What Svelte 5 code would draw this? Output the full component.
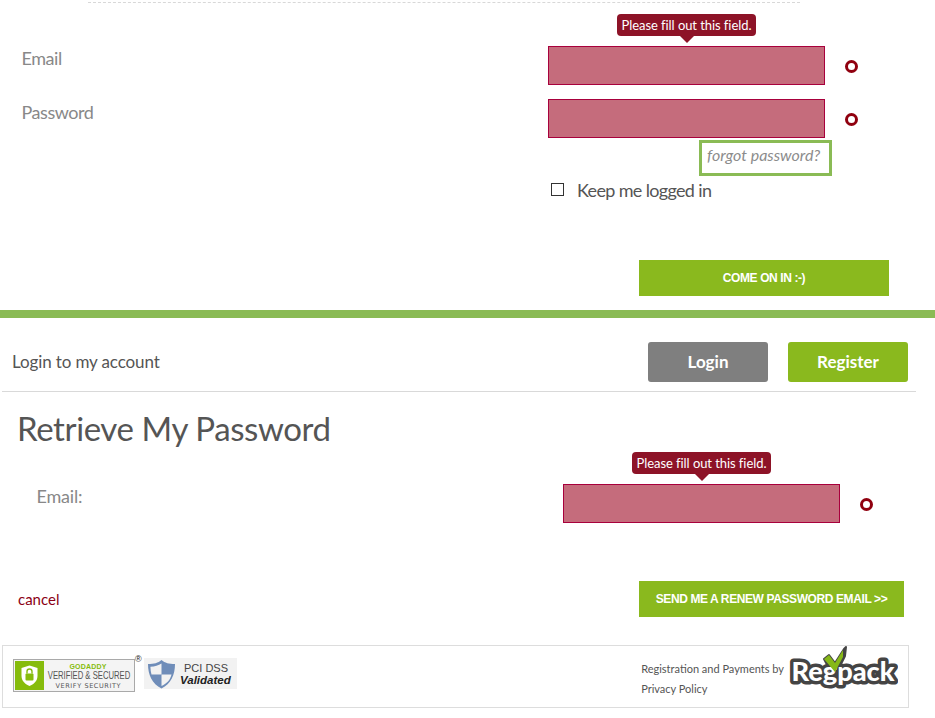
<script>
	const tip = 'Please fill out this field.';
</script>

<div class="page">
	<section class="login">
		<div class="dashes"></div>
		<div class="row first">
			<label class="label" for="email">Email</label>
			<div class="field">
				<span class="tip">{tip}</span>
				<input id="email" class="bad" type="text" />
			</div>
			<span class="dot"></span>
		</div>
		<div class="row second">
			<label class="label" for="password">Password</label>
			<div class="field">
				<input id="password" class="bad" type="password" />
			</div>
			<span class="dot"></span>
		</div>
		<div class="forgot-row">
			<a class="forgot" href="#forgot">forgot password?</a>
		</div>
		<div class="keep">
			<span class="box"></span>
			<span>Keep me logged in</span>
		</div>
		<div class="submit-row">
			<button class="action come">COME ON IN :-)</button>
		</div>
	</section>

	<div class="divider"></div>

	<header class="account">
		<span class="account-title">Login to my account</span>
		<div class="account-btns">
			<button class="btn gray">Login</button>
			<button class="btn green">Register</button>
		</div>
	</header>

	<section class="retrieve">
		<h1>Retrieve My Password</h1>
		<div class="row retrieve-row">
			<label class="label" for="renew">Email:</label>
			<div class="field">
				<span class="tip">{tip}</span>
				<input id="renew" class="bad" type="text" />
			</div>
			<span class="dot"></span>
		</div>
		<div class="retrieve-actions">
			<a class="cancel" href="#cancel">cancel</a>
			<button class="action send">SEND ME A RENEW PASSWORD EMAIL &gt;&gt;</button>
		</div>
	</section>

	<footer class="foot">
		<div class="badges">
			<svg class="godaddy" width="122" height="33" viewBox="0 0 122 33">
				<rect x="0.5" y="0.5" width="121" height="32" fill="#f4f4f4" stroke="#a9a9a9" />
				<rect x="2" y="2" width="29" height="29" fill="#86bc0c" />
				<path d="M16.5 6.5 L24.5 9 V17 C24.5 22 20.5 25.5 16.5 27 C12.5 25.5 8.5 22 8.5 17 V9 Z" fill="#fff" />
				<rect x="12.5" y="14.5" width="8" height="7" rx="1" fill="#86bc0c" />
				<path d="M14 14.5 V12.5 A2.5 2.5 0 0 1 19 12.5 V14.5" fill="none" stroke="#86bc0c" stroke-width="1.4" />
				<text x="75" y="9.5" class="gd1" text-anchor="middle">GODADDY</text>
				<text transform="translate(76 20) scale(.77 1)" class="gd2" text-anchor="middle">VERIFIED &amp; SECURED</text>
				<text x="75" y="29" class="gd3" text-anchor="middle" textLength="65">VERIFY SECURITY</text>
			</svg>
			<span class="reg">®</span>
			<svg class="pci" width="93" height="31" viewBox="0 0 93 31">
				<rect width="93" height="31" fill="#f2f2f2" />
				<g transform="translate(0 1.5)">
					<path d="M17.5 0.5 C21 3.5 25 4.5 31 4.5 C31 15 27 24.5 17.5 29 C8 24.5 4 15 4 4.5 C10 4.5 14 3.5 17.5 0.5 Z" fill="#6f8db9" />
					<path d="M17.5 4 V15 H7.5 C6.8 12.5 6.5 10 6.4 7.3 C11 7 14.5 6 17.5 4 Z" fill="#f2f2f2" />
					<path d="M17.5 15 H27.5 C26.5 20 23 24 17.5 26.5 Z" fill="#f2f2f2" />
				</g>
				<text x="40" y="14" class="pci1">PCI DSS</text>
				<text x="36" y="26" class="pci2">Validated</text>
			</svg>
		</div>
		<div class="foot-right">
			<div class="foot-links">
				<span>Registration and Payments by</span>
				<span>Privacy Policy</span>
			</div>
			<svg class="regpack" width="110" height="48" viewBox="0 0 110 48">
				<text x="3.5" y="36" class="rp-back" textLength="103" lengthAdjust="spacingAndGlyphs">Regpack</text>
				<path d="M36 14 L41 10 L47 18 L56 4 L58 2 L57 11 L48 29 L44 29 Z" fill="#444" stroke="#444" stroke-width="2" stroke-linejoin="round" />
				<text x="3.5" y="36" class="rp-front" textLength="103" lengthAdjust="spacingAndGlyphs">Regpack</text>
				<path d="M36 14 L41 10 L47 18 L55 5 L55 12 L47 27 Z" fill="#86b817" />
			</svg>
		</div>
	</footer>
</div>

<style>
	:global(body) {
		margin: 0;
		background: #fff;
	}

	.page {
		width: 935px;
		height: 718px;
		overflow: hidden;
		font-family: Lato, 'Open Sans', sans-serif;
		color: #555;
	}

	.login {
		height: 310px;
		box-sizing: border-box;
		padding-top: 2px;
	}

	.dashes {
		width: 712px;
		margin-left: 88px;
		border-top: 1px dashed #d8d8d8;
	}

	.row {
		display: grid;
		grid-template-columns: 548px 277px 1fr;
		align-items: start;
	}

	.row.first {
		margin-top: 43px;
	}

	.row.second {
		margin-top: 14px;
	}

	.label {
		padding: 1px 0 0 21.5px;
		font-size: 18px;
		line-height: 22px;
		letter-spacing: -0.45px;
		color: #888;
	}

	.second .label {
		padding-top: 2px;
	}

	.field {
		position: relative;
		height: 39px;
	}

	.bad {
		display: block;
		box-sizing: border-box;
		width: 277px;
		height: 39px;
		margin: 0;
		padding: 0;
		border: 1px solid #a8003c;
		border-radius: 0;
		background: #c56c7c;
		outline: none;
	}

	.tip {
		position: absolute;
		left: 69px;
		top: -32px;
		height: 22px;
		width: 139px;
		box-sizing: border-box;
		border-radius: 4px;
		background: #8d1327;
		color: #fff;
		font-size: 13px;
		line-height: 22px;
		letter-spacing: -0.07px;
		text-align: center;
		white-space: nowrap;
	}

	.tip::after {
		content: '';
		position: absolute;
		left: 63px;
		top: 22px;
		border: 7px solid transparent;
		border-top-color: #8d1327;
		border-bottom: 0;
	}

	.dot {
		width: 13px;
		height: 13px;
		box-sizing: border-box;
		margin: 14px 0 0 20px;
		border: 3.5px solid #90000f;
		border-radius: 50%;
		background: #fff;
	}

	.forgot-row {
		display: flex;
		margin: 2px 0 0 699px;
	}

	.forgot {
		box-sizing: border-box;
		width: 133px;
		height: 36px;
		border: 3px solid #8abb55;
		padding-left: 5px;
		font-size: 16px;
		font-style: italic;
		line-height: 23px;
		color: #8c8c8c;
		text-decoration: none;
	}

	.keep {
		display: flex;
		align-items: center;
		gap: 13px;
		margin: 2px 0 0 551px;
		height: 24px;
		font-size: 18px;
		letter-spacing: -0.65px;
	}

	.box {
		width: 13px;
		height: 13px;
		box-sizing: border-box;
		margin-top: -2px;
		border: 1px solid #333;
		background: #fff;
	}

	.submit-row {
		margin: 58px 0 0 639px;
	}

	.action {
		display: block;
		height: 36px;
		padding: 0;
		border: 0;
		background: #8ab91e;
		color: #fff;
		font-family: 'Liberation Sans', Arial, sans-serif;
		font-size: 12px;
		font-weight: 700;
		letter-spacing: -0.4px;
	}

	.come {
		width: 250px;
	}

	.send {
		width: 265px;
	}

	.divider {
		height: 8px;
		background: #8abb55;
	}

	.account {
		display: flex;
		justify-content: space-between;
		align-items: center;
		box-sizing: border-box;
		width: 914px;
		height: 74px;
		margin-left: 2px;
		padding: 24px 8px 9px 10px;
		border-bottom: 1px solid #d9d9d9;
	}

	.account-title {
		margin-top: -2px;
		font-size: 17px;
		letter-spacing: -0.12px;
		color: #555;
	}

	.account-btns {
		display: flex;
		gap: 20px;
	}

	.btn {
		width: 120px;
		height: 40px;
		padding: 0 0 2px;
		border: 0;
		border-radius: 3px;
		color: #fff;
		font-family: inherit;
		font-size: 17px;
		font-weight: 700;
	}

	.gray {
		background: #7f7f7f;
	}

	.green {
		background: #8ab91e;
	}

	.retrieve {
		height: 253px;
	}

	h1 {
		margin: 0;
		padding: 16px 0 0 17px;
		font-size: 33px;
		font-weight: 400;
		line-height: 40px;
		letter-spacing: -0.4px;
		color: #555;
	}

	.retrieve-row {
		grid-template-columns: 563px 277px 1fr;
		margin-top: 36px;
	}

	.retrieve-row .label {
		padding: 0 0 0 36.5px;
		line-height: 24px;
		letter-spacing: -0.2px;
	}

	.retrieve-actions {
		display: flex;
		justify-content: space-between;
		align-items: center;
		width: 886px;
		margin: 58px 0 0 18px;
	}

	.cancel {
		font-size: 15px;
		color: #8b0015;
		text-decoration: none;
	}

	.foot {
		display: flex;
		justify-content: space-between;
		align-items: flex-start;
		box-sizing: border-box;
		width: 907px;
		height: 63px;
		margin-left: 2px;
		padding: 0 10px;
		border: 1px solid #ddd;
	}

	.badges {
		display: flex;
		align-items: flex-start;
		margin-top: 13px;
	}

	.godaddy {
		display: block;
	}

	.pci {
		display: block;
		margin-top: -1px;
	}

	.reg {
		width: 9px;
		margin-top: -5px;
		font-family: 'Liberation Sans', sans-serif;
		font-size: 9px;
		color: #222;
	}

	.gd1 {
		font: 700 7px 'Liberation Sans', sans-serif;
		letter-spacing: 0.2px;
		fill: #86bc0c;
	}

	.gd2 {
		font: 400 10px 'Liberation Sans', sans-serif;
		fill: #555;
	}

	.gd3 {
		font: 400 6.5px 'DejaVu Sans', sans-serif;
		fill: #555;
	}

	.pci1 {
		font: 400 11px 'Liberation Sans', sans-serif;
		fill: #444;
	}

	.pci2 {
		font: italic 700 11.5px 'Liberation Sans', sans-serif;
		fill: #222;
	}

	.foot-right {
		display: flex;
		align-items: flex-start;
		gap: 4px;
	}

	.foot-links {
		display: flex;
		flex-direction: column;
		gap: 4px;
		margin-top: 15px;
		font-size: 11px;
		line-height: 16px;
		color: #555;
	}

	.regpack {
		display: block;
		margin-top: -1px;
	}

	.rp-back {
		font: 900 27px Lato, sans-serif;
		fill: #444;
		stroke: #444;
		stroke-width: 7px;
		stroke-linejoin: round;
	}

	.rp-front {
		font: 900 27px Lato, sans-serif;
		fill: #fff;
	}
</style>
